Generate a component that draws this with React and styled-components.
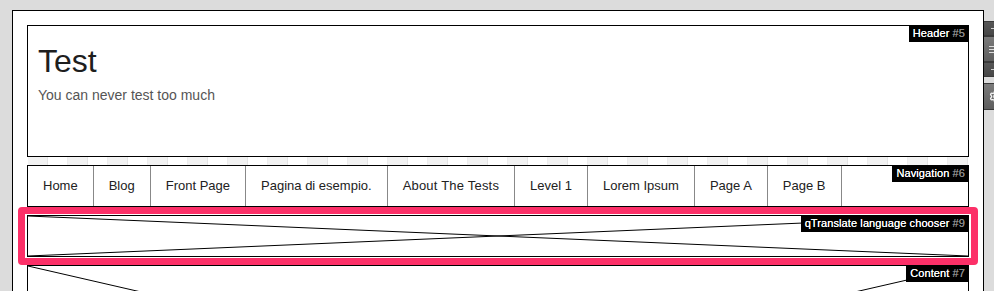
import React from "react";
import styled, { createGlobalStyle } from "styled-components";
import { Settings } from "lucide-react";

const navItems = [
  "Home",
  "Blog",
  "Front Page",
  "Pagina di esempio.",
  "About The Tests",
  "Level 1",
  "Lorem Ipsum",
  "Page A",
  "Page B",
];

const GlobalStyle = createGlobalStyle`
  html, body {
    margin: 0;
    padding: 0;
    background: #dcdcdc;
    overflow: hidden;
  }
  body {
    font-family: "Liberation Sans", Arial, Helvetica, sans-serif;
  }
`;

const Page = styled.div`
  position: relative;
  height: 291px;
  overflow: hidden;
  padding: 10px 10px 0 12px;
  box-sizing: border-box;
`;

const Frame = styled.div`
  width: 972px;
  box-sizing: border-box;
  border: 1px solid #000;
  background: #fff;
  padding: 14px 14px 0;
  min-height: 420px;
`;

const Module = styled.div`
  position: relative;
  box-sizing: border-box;
  border: 1px solid #000;
  background: #fff;
  height: ${(p) => p.$height}px;
`;

const HeaderBox = styled(Module)`
  padding: 17px 10px 0;
`;

const SiteTitle = styled.h1`
  margin: 0;
  font-size: 32px;
  line-height: 37px;
  font-weight: normal;
  color: #1e1e1e;
`;

const Tagline = styled.p`
  margin: 6px 0 0;
  font-size: 14px;
  line-height: 18px;
  color: #555;
`;

const GridStrip = styled.div`
  height: 8px;
  margin: 0 1px;
  background: repeating-linear-gradient(
    90deg,
    #f2f2f2 0 19px,
    #e4e4e4 19px 20px,
    #fff 20px 39px,
    #ededed 39px 40px
  );
`;

const Nav = styled(Module)`
  display: flex;
`;

const NavItem = styled.a`
  display: block;
  padding: 0 15px;
  line-height: 40px;
  font-size: 13px;
  letter-spacing: ${(p) => (p.$wide ? "0.2px" : "0")};
  color: #222;
  text-decoration: none;
  border-right: 1px solid #888;
`;

const Label = styled.div`
  position: absolute;
  top: -1px;
  right: -1px;
  z-index: 2;
  background: #000;
  color: #fff;
  font-size: 11px;
  letter-spacing: 0.1px;
  line-height: 17px;
  padding: 0 4px;
  white-space: nowrap;
  text-shadow: 0 0 0.6px #fff;
  span {
    color: #8c8c8c;
    text-shadow: 0 0 0.4px #8c8c8c;
  }
`;

const Highlight = styled.div`
  margin: 0 -9px;
  padding: 1px 2px;
  border: 7px solid #fc3068;
  border-radius: 4px;
`;

const Cross = styled.svg`
  position: absolute;
  inset: 0;
  width: 100%;
  height: 100%;
  display: block;
`;

const SideTabs = styled.div`
  position: absolute;
  left: 984px;
  top: 21px;
  width: 24px;
  display: flex;
  flex-direction: column;
`;

const Tab = styled.div`
  box-sizing: border-box;
  height: ${(p) => p.$h}px;
  margin-top: ${(p) => p.$gap || 0}px;
  background: ${(p) =>
    p.$tone === "dark"
      ? "linear-gradient(#565656, #474747)"
      : "linear-gradient(#7a7a7a, #5e5e5e)"};
  border-top: 1px solid #3a3a3a;
  border-bottom: 1px solid #3a3a3a;
  display: flex;
  align-items: center;
  padding-left: ${(p) => p.$pad}px;
  color: #e8e8e8;
`;

const Dash = styled.i`
  display: block;
  width: 6px;
  height: 1px;
  background: #d0d0d0;
`;

const Bars = styled.i`
  display: block;
  width: 9px;
  height: 7px;
  background: linear-gradient(
    #ddd 0 1px,
    transparent 1px 3px,
    #ddd 3px 4px,
    transparent 4px 6px,
    #ddd 6px 7px
  );
`;

const Placeholder = ({ children }) => (
  <>
    <Cross viewBox="0 0 100 100" preserveAspectRatio="none">
      <line x1="0" y1="0" x2="100" y2="100" stroke="#000" strokeWidth="1" vectorEffect="non-scaling-stroke" />
      <line x1="100" y1="0" x2="0" y2="100" stroke="#000" strokeWidth="1" vectorEffect="non-scaling-stroke" />
    </Cross>
    {children}
  </>
);

export default function App() {
  return (
    <>
      <GlobalStyle />
      <Page>
        <Frame>
          <HeaderBox $height={132}>
            <SiteTitle>Test</SiteTitle>
            <Tagline>You can never test too much</Tagline>
            <Label>
              Header <span>#5</span>
            </Label>
          </HeaderBox>
          <GridStrip />
          <Nav $height={42}>
            {navItems.map((item) => (
              <NavItem key={item} href="#" $wide={item === "About The Tests"}>
                {item}
              </NavItem>
            ))}
            <Label>
              Navigation <span>#6</span>
            </Label>
          </Nav>
          <Highlight>
            <Module $height={42}>
              <Placeholder>
                <Label>
                  qTranslate language chooser <span>#9</span>
                </Label>
              </Placeholder>
            </Module>
          </Highlight>
          <Module $height={218}>
            <Placeholder>
              <Label>
                Content <span>#7</span>
              </Label>
            </Placeholder>
          </Module>
        </Frame>
        <SideTabs>
          <Tab $tone="dark" $h={15} $pad={7}>
            <Dash />
          </Tab>
          <Tab $tone="mid" $h={26} $pad={5}>
            <Bars />
          </Tab>
          <Tab $tone="dark" $h={15} $pad={7}>
            <Dash />
          </Tab>
          <Tab $tone="mid" $h={27} $gap={6} $pad={5}>
            <Settings size={13} strokeWidth={2.5} color="#f2f2f2" />
          </Tab>
        </SideTabs>
      </Page>
    </>
  );
}
